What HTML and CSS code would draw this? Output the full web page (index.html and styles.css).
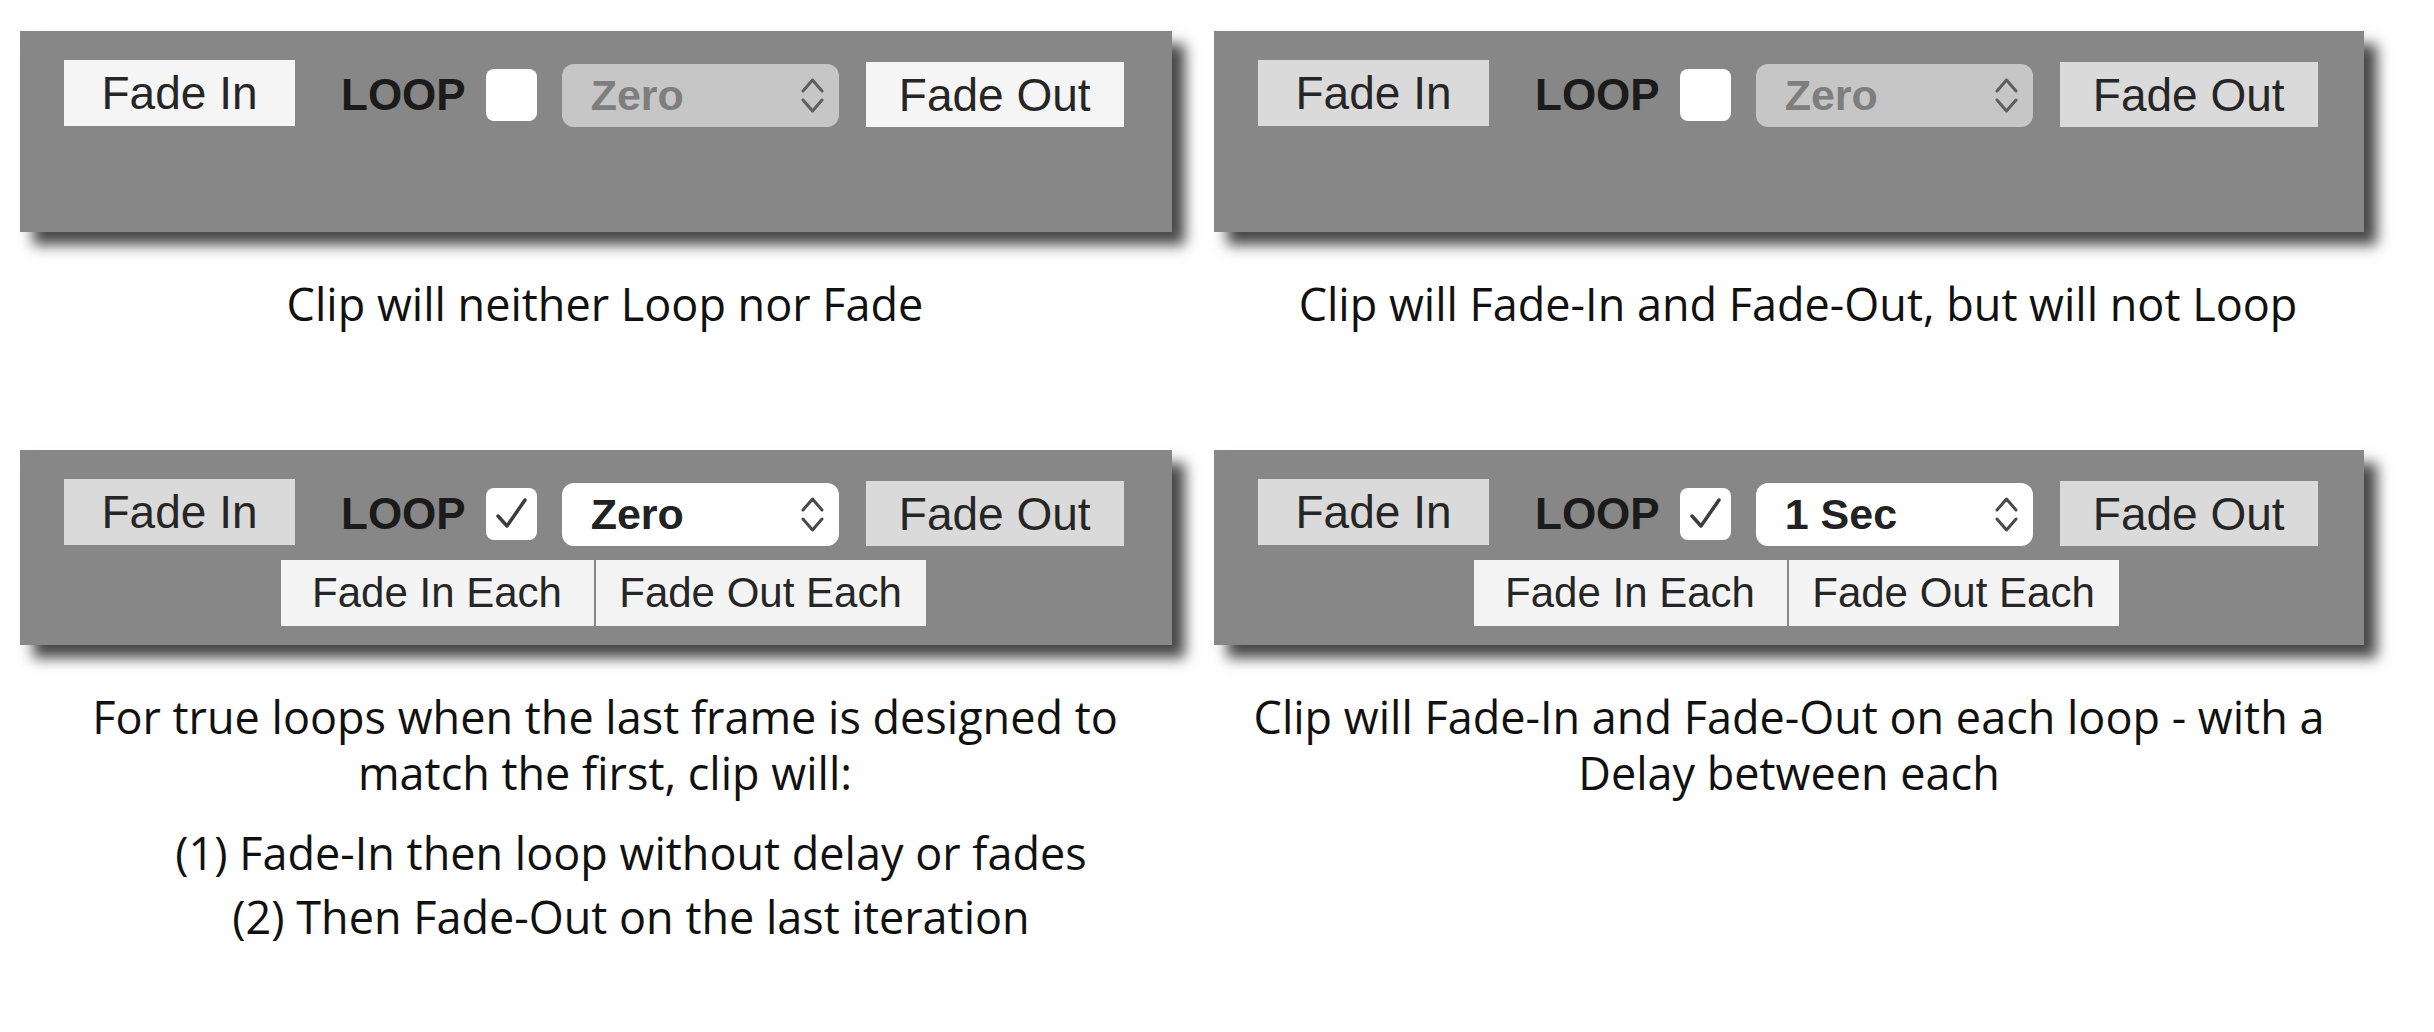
FILE: index.html
```html
<!DOCTYPE html>
<html lang="en">
<head>
    <meta charset="UTF-8">
    <title>Loop and Fade Options</title>
    <link rel="stylesheet" href="styles.css">
</head>
<body>
    <div class="board">

        <!-- No loop, no fade -->
        <div class="cell">
            <div class="panel tall">
                <div class="controls">
                    <button class="btn fade-in">Fade In</button>
                    <span class="loop">LOOP</span>
                    <span class="check"></span>
                    <div class="select disabled">
                        <span>Zero</span>
                        <svg class="chev" width="23" height="37" viewBox="0 0 23 37"><path d="M2 14 L11.5 3 L21 14 M2 23 L11.5 34 L21 23"/></svg>
                    </div>
                    <button class="btn fade-out">Fade Out</button>
                </div>
            </div>
            <p class="caption">Clip will neither Loop nor Fade</p>
        </div>

        <!-- Fade in and out, no loop -->
        <div class="cell">
            <div class="panel tall">
                <div class="controls">
                    <button class="btn fade-in on">Fade In</button>
                    <span class="loop">LOOP</span>
                    <span class="check"></span>
                    <div class="select disabled">
                        <span>Zero</span>
                        <svg class="chev" width="23" height="37" viewBox="0 0 23 37"><path d="M2 14 L11.5 3 L21 14 M2 23 L11.5 34 L21 23"/></svg>
                    </div>
                    <button class="btn fade-out on">Fade Out</button>
                </div>
            </div>
            <p class="caption">Clip will Fade-In and Fade-Out, but will not Loop</p>
        </div>

        <!-- True loop -->
        <div class="cell">
            <div class="panel">
                <div class="controls">
                    <button class="btn fade-in on">Fade In</button>
                    <span class="loop">LOOP</span>
                    <span class="check">
                        <svg width="51" height="52" viewBox="0 0 51 52"><polyline points="12,28 21,38 39,12"/></svg>
                    </span>
                    <div class="select">
                        <span>Zero</span>
                        <svg class="chev" width="23" height="37" viewBox="0 0 23 37"><path d="M2 14 L11.5 3 L21 14 M2 23 L11.5 34 L21 23"/></svg>
                    </div>
                    <button class="btn fade-out on">Fade Out</button>
                </div>
                <div class="each-row">
                    <button class="btn each-in">Fade In Each</button>
                    <button class="btn each-out">Fade Out Each</button>
                </div>
            </div>
            <p class="caption">For true loops when the last frame is designed to<br>match the first, clip will:</p>
            <ul class="steps">
                <li>(1) Fade-In then loop without delay or fades</li>
                <li>(2) Then Fade-Out on the last iteration</li>
            </ul>
        </div>

        <!-- Loop with delay -->
        <div class="cell">
            <div class="panel">
                <div class="controls">
                    <button class="btn fade-in on">Fade In</button>
                    <span class="loop">LOOP</span>
                    <span class="check">
                        <svg width="51" height="52" viewBox="0 0 51 52"><polyline points="12,28 21,38 39,12"/></svg>
                    </span>
                    <div class="select">
                        <span>1 Sec</span>
                        <svg class="chev" width="23" height="37" viewBox="0 0 23 37"><path d="M2 14 L11.5 3 L21 14 M2 23 L11.5 34 L21 23"/></svg>
                    </div>
                    <button class="btn fade-out on">Fade Out</button>
                </div>
                <div class="each-row">
                    <button class="btn each-in">Fade In Each</button>
                    <button class="btn each-out">Fade Out Each</button>
                </div>
            </div>
            <p class="caption flush">Clip will Fade-In and Fade-Out on each loop - with a<br>Delay between each</p>
        </div>

    </div>
</body>
</html>
```

FILE: styles.css
```css
/* Page */
body {
    margin: 0;
    padding: 31px 0 0 20px;
    background: #fff;
    font-family: "Liberation Sans", Arial, sans-serif;
}

.board {
    display: grid;
    grid-template-columns: 1152px 1150px;
    column-gap: 42px;
    row-gap: 118px;
}

/* Grey control panels */
.panel {
    background-color: #878787;
    box-shadow: 13px 13px 13px rgba(0, 0, 0, 0.72);
    padding: 27px 0 19px 44px;
}
.panel.tall { height: 201px; box-sizing: border-box; }

.controls { display: flex; align-items: center; }

.btn {
    font-family: "Liberation Sans", Arial, sans-serif;
    font-size: 46px;
    color: #262626;
    background-color: #f5f5f5;
    border: none;
    border-radius: 0;
    height: 66px;
    padding: 0;
    text-align: center;
}
.btn.on { background-color: #dadada; }
.fade-in { width: 231px; }
.fade-out { width: 258px; height: 65px; margin-left: 27px; margin-top: 4px; }

.loop {
    font-weight: bold;
    font-size: 44px;
    color: #1b1b1b;
    margin-left: 46px;
    margin-top: 4px;
}

.check {
    width: 51px;
    height: 52px;
    background: #fff;
    border-radius: 8px;
    margin-left: 20px;
    margin-top: 4px;
    display: flex;
}
.check polyline { fill: none; stroke: #3d3d3d; stroke-width: 3.5; stroke-linecap: round; stroke-linejoin: round; }

.select {
    width: 277px;
    height: 63px;
    box-sizing: border-box;
    margin-left: 25px;
    margin-top: 5px;
    padding: 0 15px 0 29px;
    background: #fff;
    border-radius: 12px;
    display: flex;
    align-items: center;
    justify-content: space-between;
    font-weight: bold;
    font-size: 43px;
    color: #222;
}
.select.disabled { background: #c6c6c6; color: #7e7e7e; }
.chev path { fill: none; stroke: #4a4a4a; stroke-width: 3; stroke-linecap: round; stroke-linejoin: round; }
.select.disabled .chev path { stroke: #5e5e5e; }

/* Second row of buttons */
.each-row {
    display: flex;
    justify-content: center;
    gap: 2px;
    margin: 14px 0 0 -30px;
}
.each-row .btn { font-size: 42px; background-color: #f4f4f4; }
.each-in { width: 313px; }
.each-out { width: 330px; }

/* Captions */
.caption {
    font-family: "Open Sans", sans-serif;
    font-size: 45px;
    line-height: 56px;
    color: #111;
    text-align: center;
    white-space: nowrap;
    margin: 44px 0 0;
    padding-left: 18px;
}
.caption.flush { padding-left: 0; }
.steps {
    list-style: none;
    margin: 20px 0 0;
    padding: 0 0 0 70px;
    font-family: "Open Sans", sans-serif;
    font-size: 45px;
    line-height: 64px;
    color: #111;
    text-align: center;
    white-space: nowrap;
}
```
